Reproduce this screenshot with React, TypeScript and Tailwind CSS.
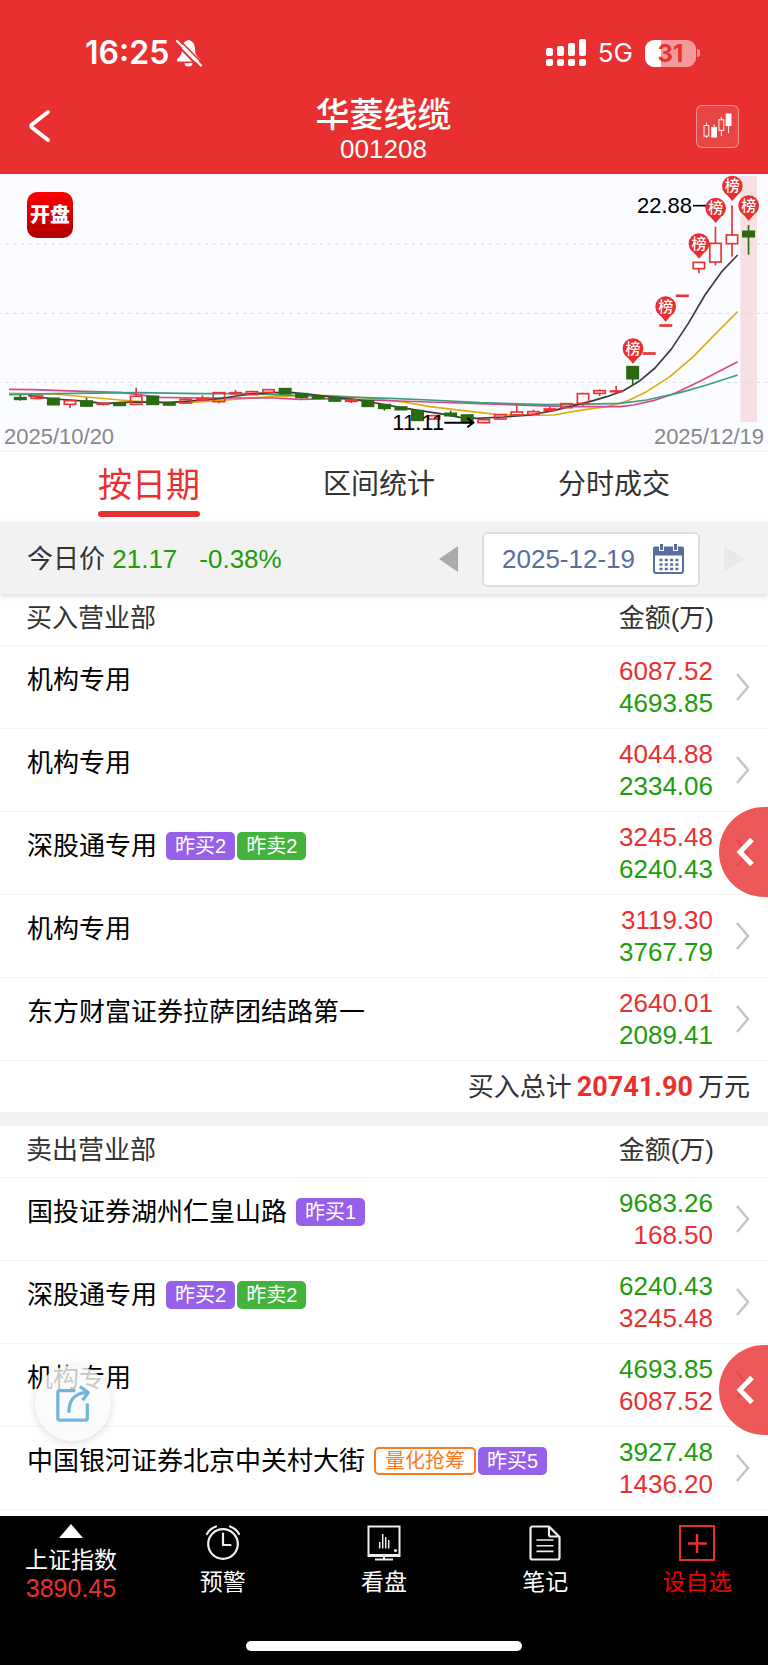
import React from 'react';

interface Tag {
  text: string;
  kind: 'buy' | 'sell' | 'quant';
}

interface Seat {
  name: string;
  tags?: Tag[];
  buy: string;
  sell: string;
}

const buySeats: Seat[] = [
  { name: '机构专用', buy: '6087.52', sell: '4693.85' },
  { name: '机构专用', buy: '4044.88', sell: '2334.06' },
  {
    name: '深股通专用',
    tags: [{ text: '昨买2', kind: 'buy' }, { text: '昨卖2', kind: 'sell' }],
    buy: '3245.48',
    sell: '6240.43',
  },
  { name: '机构专用', buy: '3119.30', sell: '3767.79' },
  { name: '东方财富证券拉萨团结路第一', buy: '2640.01', sell: '2089.41' },
];

const sellSeats: Seat[] = [
  { name: '国投证券湖州仁皇山路', tags: [{ text: '昨买1', kind: 'buy' }], buy: '168.50', sell: '9683.26' },
  {
    name: '深股通专用',
    tags: [{ text: '昨买2', kind: 'buy' }, { text: '昨卖2', kind: 'sell' }],
    buy: '3245.48',
    sell: '6240.43',
  },
  { name: '机构专用', buy: '6087.52', sell: '4693.85' },
  {
    name: '中国银河证券北京中关村大街',
    tags: [{ text: '量化抢筹', kind: 'quant' }, { text: '昨买5', kind: 'buy' }],
    buy: '1436.20',
    sell: '3927.48',
  },
];

// [body top, body bottom, high, low, direction], 3 units per pixel
type Candle = [number, number, number, number, 'up' | 'down'];
const candles: Candle[] = [
  [683, 688, 675, 692, 'down'],
  [678, 685, 677, 688, 'up'],
  [685, 704, 683, 706, 'down'],
  [692, 703, 691, 714, 'up'],
  [693, 708, 683, 710, 'down'],
  [700, 703, 698, 706, 'up'],
  [700, 706, 700, 706, 'down'],
  [679, 703, 653, 704, 'up'],
  [679, 703, 678, 703, 'down'],
  [699, 705, 699, 705, 'down'],
  [688, 699, 683, 702, 'up'],
  [685, 690, 676, 692, 'up'],
  [668, 695, 667, 700, 'up'],
  [668, 671, 660, 674, 'up'],
  [665, 674, 662, 676, 'up'],
  [659, 667, 658, 672, 'up'],
  [656, 671, 656, 671, 'down'],
  [671, 682, 671, 686, 'down'],
  [679, 685, 679, 685, 'down'],
  [683, 693, 681, 695, 'down'],
  [689, 694, 686, 699, 'up'],
  [692, 709, 690, 711, 'down'],
  [704, 715, 702, 722, 'down'],
  [711, 719, 711, 719, 'down'],
  [722, 751, 722, 751, 'down'],
  [737, 747, 736, 748, 'up'],
  [730, 737, 722, 738, 'down'],
  [735, 757, 735, 757, 'down'],
  [749, 758, 743, 759, 'up'],
  [734, 747, 733, 748, 'up'],
  [726, 735, 706, 737, 'up'],
  [725, 733, 719, 737, 'up'],
  [717, 721, 711, 725, 'up'],
  [701, 713, 700, 714, 'up'],
  [671, 700, 668, 707, 'up'],
  [662, 670, 658, 678, 'up'],
  [663, 665, 648, 668, 'up'],
  [590, 626, 589, 645, 'down'],
  [549, 552, 549, 552, 'up'],
  [465, 468, 465, 468, 'up'],
  [376, 379, 376, 379, 'up'],
  [277, 296, 277, 310, 'up'],
  [220, 276, 170, 286, 'up'],
  [195, 221, 106, 260, 'up'],
  [184, 200, 165, 254, 'down'],
];

const averages = [
  {
    color: '#e0ac12',
    points:
      '27,670 160,672 260,681 360,690 460,697 560,698 660,691 760,684 830,679 900,677 1000,677 1100,684 1210,696 1290,710 1390,722 1490,733 1570,736 1660,735 1740,721 1820,710 1880,694 1940,665 2010,620 2080,560 2150,488 2213,425',
  },
  {
    color: '#d9488b',
    points:
      '27,658 100,659 250,664 360,667 480,682 600,684 700,684 820,684 900,688 1000,686 1100,690 1290,696 1440,701 1590,706 1700,710 1860,710 1900,705 1960,692 2020,672 2100,634 2213,575',
  },
  {
    color: '#3b9e82',
    points:
      '27,674 160,671 410,668 600,671 750,671 900,677 1000,680 1190,686 1290,690 1440,698 1640,704 1740,703 1860,700 1940,690 2040,668 2120,645 2213,615',
  },
  {
    color: '#3a3a3f',
    points:
      '85,677 160,687 210,690 260,694 310,701 370,697 410,696 460,697 510,697 610,690 660,686 710,678 760,671 820,668 870,667 930,673 1000,681 1060,688 1110,696 1200,712 1260,722 1320,731 1380,742 1430,745 1510,741 1590,735 1660,722 1720,707 1780,692 1820,680 1870,662 1920,632 1965,594 2015,536 2065,460 2115,375 2165,305 2213,255',
  },
];

const pins = [
  [1899, 536],
  [1997, 410],
  [2097, 221],
  [2147, 114],
  [2197, 48],
  [2246, 107],
];

const tagClasses = {
  buy: 'bg-[#9660e9] text-white px-[9px]',
  sell: 'bg-[#42b43c] text-white px-[9px]',
  quant: 'border-2 border-[#fa7a1e] text-[#fa7a1e] px-[9px]',
};

const KLineChart: React.FC = () => (
  <section className="relative border-b border-gray-100 bg-[#fbfcff]">
    <svg viewBox="0 12 2304 831" className="block w-full" role="img" aria-label="日K线">
      <rect x="2221" y="18" width="50" height="738" fill="#f7dfe4" />
      {[222, 430, 637].map((y) => (
        <line key={y} x1="-6" x2="2304" y1={y} y2={y} stroke="#d6d8de" strokeWidth="3" strokeDasharray="9 14" />
      ))}
      {averages.map((line) => (
        <polyline key={line.color} points={line.points} fill="none" stroke={line.color} strokeWidth="5" strokeLinejoin="round" />
      ))}
      {candles.map(([top, bottom, high, low, dir], i) => {
        const x = 61 + i * 49.65;
        const color = dir === 'up' ? '#ec3232' : '#2b6a12';
        return (
          <g key={i} stroke={color} strokeWidth="5">
            <line x1={x} x2={x} y1={high} y2={top} />
            <line x1={x} x2={x} y1={bottom} y2={low} />
            <rect x={x - 17} y={top} width="34" height={bottom - top} fill={dir === 'up' ? 'none' : color} />
          </g>
        );
      })}
      <path d="M2079 107h40" stroke="#000" strokeWidth="5" />
      <path d="M1333 758h84M1402 744l18 14l-18 14" stroke="#000" strokeWidth="6" fill="none" />
      {pins.map(([x, y]) => (
        <g key={x}>
          <path d={`M${x - 26} ${y + 15}L${x} ${y + 45}L${x + 26} ${y + 15}z`} fill="#e83030" />
          <circle cx={x} cy={y} r="31" fill="#e83030" />
          <text x={x} y={y + 16} textAnchor="middle" fontSize="45" fontWeight="500" fill="#fff">
            榜
          </text>
        </g>
      ))}
      <text x="1911" y="129" fontSize="66">22.88</text>
      <text x="1177" y="781" fontSize="66">11.11</text>
    </svg>
    <div className="absolute left-[27px] top-[18px] flex size-[46px] items-center justify-center rounded-[10px] bg-gradient-to-b from-[#ff0000] to-[#b00000] text-[20px] leading-none font-black text-white">
      开盘
    </div>
    <div className="absolute inset-x-0 bottom-[2px] flex justify-between px-1 text-[22px] leading-[24px] text-[#888]">
      <span>2025/10/20</span>
      <span>2025/12/19</span>
    </div>
  </section>
);

const StatusBar: React.FC = () => (
  <div className="flex h-[42px] items-center justify-between pr-[68px] pl-[85px]">
    <div className="flex items-center gap-[6px]">
      <span className="font-['Inter'] text-[32px] leading-10 font-semibold">16:25</span>
      <svg width="27" height="28" viewBox="0 0 27 28">
        <path d="M13.5 1c-4.600 1.200-6.500 4.800-6.500 9 0 5.500-2 7.500-4.600 9.700-1.200 1.200-.7 2.800.9 2.800h20.400c1.600 0 2.100-1.600.9-2.800C22 17.500 20 15.500 20 10c0-4.200-1.900-7.800-6.500-9z" fill="#fff" />
        <path d="M9.500 24h8a4 3.600 0 0 1-8 0z" fill="#fff" />
        <path d="M0 3.500L24.500 29" stroke="#e83030" strokeWidth="2" />
        <path d="M2 2L26 26.500" stroke="#fff" strokeWidth="2.200" strokeLinecap="round" />
        <path d="M4.500 1L28 25" stroke="#e83030" strokeWidth="1.600" />
      </svg>
    </div>
    <div className="flex items-center gap-3">
      <svg width="40" height="28" viewBox="0 0 40 28" fill="#fff">
        <rect x="0" y="9" width="7" height="8" rx="2" />
        <rect x="11" y="7" width="7" height="10" rx="2" />
        <rect x="22" y="4" width="7" height="13" rx="2" />
        <rect x="33" y="0" width="7" height="17" rx="2" />
        <rect x="0" y="20" width="7" height="7" rx="2" />
        <rect x="11" y="20" width="7" height="7" rx="2" />
        <rect x="22" y="20" width="7" height="7" rx="2" />
        <rect x="33" y="20" width="7" height="7" rx="2" />
      </svg>
      <span className="font-['Inter'] text-[26px] leading-10">5G</span>
      <div className="flex items-center gap-px">
        <div className="flex h-[27px] w-[51px] items-center justify-center rounded-[9px] bg-linear-to-r from-white from-31% to-[#f59a9a] to-31%">
          <span className="font-['Inter'] text-[24px] leading-[27px] font-bold text-[#e83030]">31</span>
        </div>
        <div className="h-2 w-[3px] rounded-r-full bg-[#f59a9a]" />
      </div>
    </div>
  </div>
);

const Header: React.FC = () => (
  <header className="bg-[#e83030] pt-8 text-white">
    <StatusBar />
    <div className="flex h-[100px] items-center justify-between pt-1 pr-[29px] pl-7">
      <button aria-label="返回" className="w-[43px]">
        <svg width="23" height="34" viewBox="0 0 23 34" fill="none" stroke="#fff" strokeWidth="4" strokeLinecap="round" strokeLinejoin="round">
          <path d="M20 3L4 15.500Q2.500 17 4 18.500L20 31" />
        </svg>
      </button>
      <h1 className="flex flex-col items-center pt-2 text-[34px] leading-[38px] font-medium">
        华菱线缆
        <span className="text-[26px] leading-[30px] font-normal">001208</span>
      </h1>
      <button aria-label="K线" className="flex size-[43px] items-center justify-center rounded-md border border-white/40 bg-white/10">
        <svg width="29" height="26" viewBox="0 0 30 27" fill="none" stroke="#fff" strokeWidth="1">
          <rect x="1" y="13" width="5" height="11" />
          <path d="M3.500 10v3M3.500 24v2" />
          <rect x="9" y="15" width="5" height="10" fill="#fff" />
          <path d="M11.500 12v3" />
          <rect x="16.500" y="7" width="5" height="11" />
          <path d="M19 4v3M19 18v6" />
          <rect x="24" y="1" width="5" height="12" fill="#fff" />
          <path d="M26.500 13v8" />
        </svg>
      </button>
    </div>
  </header>
);

const Tabs: React.FC = () => (
  <nav className="flex h-[70px] items-start justify-between px-[98px] text-[28px] leading-[64px] text-[#333]">
    <button className="relative h-[65px] text-[34px] text-[#e83030]">
      按日期
      <span className="absolute inset-x-0 bottom-0 h-[6px] rounded-full bg-[#e83030]" />
    </button>
    <button className="h-[65px]">区间统计</button>
    <button className="h-[65px]">分时成交</button>
  </nav>
);

const DateBar: React.FC = () => (
  <div className="relative z-10 flex h-[72px] items-center justify-between bg-[#f2f2f2] pt-[2px] pr-6 pl-[27px] text-[26px] leading-8 shadow-[0_2px_5px_rgba(0,0,0,0.15)]">
    <p className="text-[#333]">
      今日价 <span className="text-[#1f9c0b]">21.17</span>
      <span className="ml-[22px] text-[#1f9c0b]">-0.38%</span>
    </p>
    <div className="flex items-center gap-6">
      <button aria-label="前一天">
        <svg width="19" height="26" viewBox="0 0 19 26"><path d="M19 0v26L0 13z" fill="#ababab" /></svg>
      </button>
      <button className="flex h-[55px] w-[218px] items-center justify-between rounded-md border-2 border-[#ddd] bg-white pr-[14px] pl-[18px] text-[#5a6ca0]">
        2025-12-19
        <svg width="31" height="30" viewBox="0 0 31 30">
          <rect x="1" y="4" width="29" height="25" rx="2" fill="#fff" stroke="#5a6ca0" strokeWidth="2" />
          <rect x="0" y="2.500" width="31" height="9" rx="2" fill="#5a6ca0" />
          <path d="M8.500 0v7M22.500 0v7" stroke="#fff" strokeWidth="5" />
          <path d="M8.500 0v6M22.500 0v6" stroke="#5a6ca0" strokeWidth="3" />
          <path d="M6.500 16h19M6.500 20.500h19M6.500 25h19" stroke="#5a6ca0" strokeWidth="2.500" strokeDasharray="3 2.300" />
        </svg>
      </button>
      <button aria-label="后一天" disabled>
        <svg width="20" height="26" viewBox="0 0 20 26"><path d="M0 0v26L20 13z" fill="#e8e8e8" /></svg>
      </button>
    </div>
  </div>
);

const SeatRow: React.FC<{ seat: Seat; sellFirst?: boolean }> = ({ seat, sellFirst }) => (
  <li>
    <a href="#seat" className="flex h-[83px] items-start border-b border-[#f3f3f3] pr-[18px] pl-[27px] text-[26px] leading-8">
      <span className="mt-[18px] text-black">{seat.name}</span>
      <span className="mt-5 ml-[9px] flex gap-[2px]">
        {seat.tags?.map((tag) => (
          <span
            key={tag.text}
            className={`flex h-7 items-center rounded-[5px] text-[20px] leading-6 ${tagClasses[tag.kind]}`}
          >
            {tag.text}
          </span>
        ))}
      </span>
      <span className={`mt-[9px] ml-auto flex items-end text-[#e83030] ${sellFirst ? 'flex-col-reverse' : 'flex-col'}`}>
        <span>{seat.buy}</span>
        <span className="text-[#1f9c0b]">{seat.sell}</span>
      </span>
      <svg className="mt-[27px] ml-[23px]" width="14" height="28" viewBox="0 0 14 28" fill="none" stroke="#c4c4c4" strokeWidth="2.500">
        <path d="M1 1l11 13L1 27" />
      </svg>
    </a>
  </li>
);

const SeatList: React.FC<{ title: string; seats: Seat[]; sellFirst?: boolean }> = ({ title, seats, sellFirst }) => (
  <>
    <div className="flex h-[52px] items-center justify-between border-b border-[#f3f3f3] pr-[54px] pb-[3px] pl-[26px] text-[26px] leading-8 text-[#333]">
      <h2>{title}</h2>
      <span>金额(万)</span>
    </div>
    <ul>
      {seats.map((seat, i) => (
        <SeatRow key={i} seat={seat} sellFirst={sellFirst} />
      ))}
    </ul>
  </>
);

const DrawerHandle: React.FC<{ className: string }> = ({ className }) => (
  <button
    aria-label="展开"
    className={`absolute right-0 flex h-[90px] w-[49px] items-center rounded-l-full bg-[#e83030]/80 pl-[17px] ${className}`}
  >
    <svg width="18" height="28" viewBox="0 0 18 28" fill="none" stroke="#fff" strokeWidth="5">
      <path d="M16 1.500L4 14l12 12.500" />
    </svg>
  </button>
);

const BottomNav: React.FC = () => (
  <footer className="bg-black pb-[15px] text-white">
    <nav className="flex h-[125px] text-[23px] leading-7">
      <button className="flex w-[142px] flex-col items-center pt-2">
        <svg width="24" height="14" viewBox="0 0 24 14"><path d="M12 0l12 14H0z" fill="#fff" /></svg>
        <span className="mt-2">上证指数</span>
        <span className="text-[25px] text-[#e83030]">3890.45</span>
      </button>
      <button className="flex flex-1 flex-col items-center gap-[7px] pt-[9px]">
        <svg width="36" height="36" viewBox="0 0 36 36" fill="none" stroke="#eee" strokeWidth="2.200" strokeLinecap="round" strokeLinejoin="round">
          <circle cx="18" cy="19" r="14.800" />
          <path d="M18 8.500V20h7.500" />
          <path d="M2 9Q4.500 4 11 1.500M34 9Q31.500 4 25 1.500" />
        </svg>
        预警
      </button>
      <button className="flex flex-1 flex-col items-center gap-[7px] pt-[9px]">
        <svg width="36" height="36" viewBox="0 0 36 36" fill="none" stroke="#eee" strokeWidth="2">
          <rect x="2.500" y="1.500" width="31" height="29.500" />
          <path d="M2 30.500h32" strokeWidth="3" />
          <path d="M18 32v3M9 34.500h18" />
          <path d="M13.700 17v6.500M16.700 9v14.500M19.700 12v11.500M22.700 15v8.500" strokeWidth="1.500" />
          <circle cx="29.500" cy="25.500" r="1.600" fill="#eee" stroke="none" />
        </svg>
        看盘
      </button>
      <button className="flex flex-1 flex-col items-center gap-[7px] pt-[9px]">
        <svg width="36" height="36" viewBox="0 0 36 36" fill="none" stroke="#eee" strokeWidth="2.200" strokeLinejoin="round">
          <path d="M5.500 1.500h16.500l10.500 10.500V32.500a2 2 0 0 1-2 2h-25a2 2 0 0 1-2-2V3.500a2 2 0 0 1 2-2z" />
          <path d="M22 2v7.500a2 2 0 0 0 2 2h8" />
          <path d="M9.500 15h17M9.500 20.700h17M9.500 26.400h17" strokeWidth="1.600" />
        </svg>
        笔记
      </button>
      <button className="flex w-[142px] flex-col items-center gap-[7px] pt-[9px] text-[#f00000]">
        <svg width="36" height="36" viewBox="0 0 36 36" fill="none" stroke="#e83030" strokeWidth="2">
          <rect x="1" y="1" width="34" height="34" />
          <path d="M18 9v19M9 18.500h19" strokeWidth="2.500" />
        </svg>
        设自选
      </button>
    </nav>
    <div className="mx-auto h-[10px] w-[276px] rounded-full bg-white" />
  </footer>
);

export default function App() {
  return (
    <div className="min-h-screen bg-white font-['Liberation_Sans','Noto_Sans_CJK_SC',sans-serif]">
      <Header />
      <KLineChart />
      <Tabs />
      <DateBar />
      <section className="relative">
        <SeatList title="买入营业部" seats={buySeats} />
        <p className="flex h-[51px] items-center justify-end gap-[5px] pr-[18px] text-[26px] leading-8 text-[#333]">
          买入总计
          <strong className="font-['Roboto'] text-[27px] font-bold text-[#e83030]">20741.90</strong>
          万元
        </p>
        <DrawerHandle className="top-[213px]" />
      </section>
      <div className="h-[14px] bg-[#f2f2f2]" />
      <section className="relative overflow-hidden pb-[6px]">
        <SeatList title="卖出营业部" seats={sellSeats} sellFirst />
        <DrawerHandle className="top-[219px]" />
        <button
          aria-label="分享"
          className="absolute top-[239px] left-[35px] flex size-[76px] items-center justify-center rounded-full bg-[#fafafa]/80 shadow-[0_2px_8px_rgba(0,0,0,0.15)]"
        >
          <svg width="35" height="37" viewBox="0 0 38 40" fill="none" stroke="#72b5dc" strokeWidth="3.500" strokeLinejoin="round">
            <path d="M21 6H4a2 2 0 0 0-2 2v28a2 2 0 0 0 2 2h28a2 2 0 0 0 2-2V20" />
            <path d="M14 30C14 18 18 9 34 8M26 1.500l9 6.500l-6 8.500" />
          </svg>
        </button>
      </section>
      <BottomNav />
    </div>
  );
}
